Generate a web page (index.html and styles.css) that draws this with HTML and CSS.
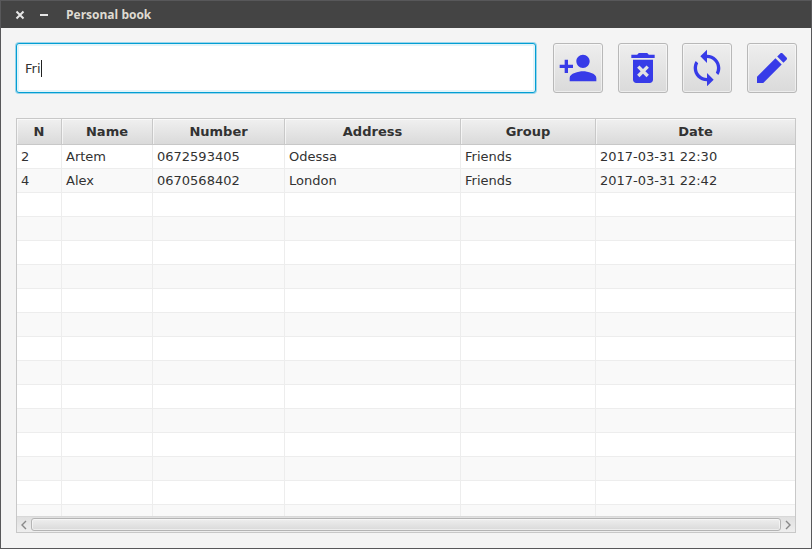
FILE: index.html
```html
<!DOCTYPE html>
<html lang="en">
<head>
<meta charset="utf-8">
<title>Personal book</title>
<link rel="stylesheet" href="styles.css">
</head>
<body>
<div class="window">
  <header class="titlebar">
    <button class="win-button" type="button" aria-label="Close"><svg width="10" height="10" viewBox="0 0 10 10"><path d="M1.5 1.5l7 7M8.5 1.5l-7 7"/></svg></button>
    <button class="win-button" type="button" aria-label="Minimize"><svg width="10" height="10" viewBox="0 0 10 10"><path d="M1 5h8"/></svg></button>
    <h1 class="title">Personal book</h1>
  </header>
  <main class="content">
    <div class="toolbar">
      <div class="search">
        <input class="search-input" type="text" value="Fri" aria-label="Search">
        <span class="caret"></span>
      </div>
      <div class="tools">
        <button class="tool" type="button" aria-label="Add person"><svg viewBox="0 0 24 24"><path d="M15 12c2.21 0 4-1.79 4-4s-1.79-4-4-4-4 1.79-4 4 1.79 4 4 4zm-9-2V7H4v3H1v2h3v3h2v-3h3v-2H6zm9 4c-2.67 0-8 1.34-8 4v2h16v-2c0-2.66-5.33-4-8-4z"/></svg></button>
        <button class="tool" type="button" aria-label="Delete"><svg viewBox="0 0 24 24"><path d="M6 19c0 1.1.9 2 2 2h8c1.1 0 2-.9 2-2V7H6v12zm2.46-7.12l1.41-1.41L12 12.59l2.12-2.12 1.41 1.41L13.41 14l2.12 2.12-1.41 1.41L12 15.41l-2.12 2.12-1.41-1.41L10.59 14l-2.13-2.12zM15.5 4l-1-1h-5l-1 1H5v2h14V4z"/></svg></button>
        <button class="tool" type="button" aria-label="Refresh"><svg viewBox="0 0 24 24"><path d="M12 4V1L8 5l4 4V6c3.31 0 6 2.69 6 6 0 1.01-.25 1.97-.7 2.8l1.46 1.46C19.54 15.03 20 13.57 20 12c0-4.42-3.58-8-8-8zm0 14c-3.31 0-6-2.69-6-6 0-1.01.25-1.97.7-2.8L5.24 7.74C4.46 8.97 4 10.43 4 12c0 4.42 3.58 8 8 8v3l4-4-4-4v3z"/></svg></button>
        <button class="tool" type="button" aria-label="Edit"><svg viewBox="0 0 24 24"><path d="M3 17.25V21h3.75L17.81 9.94l-3.75-3.75L3 17.25zM20.71 7.04c.39-.39.39-1.02 0-1.41l-2.34-2.34c-.39-.39-1.02-.39-1.41 0l-1.83 1.83 3.75 3.75 1.83-1.83z"/></svg></button>
      </div>
    </div>
    <div class="table-view">
      <div class="table-clip">
        <table class="contacts">
          <colgroup><col class="col-n"><col class="col-name"><col class="col-number"><col class="col-address"><col class="col-group"><col></colgroup>
          <thead>
            <tr><th scope="col">N</th><th scope="col">Name</th><th scope="col">Number</th><th scope="col">Address</th><th scope="col">Group</th><th scope="col">Date</th></tr>
          </thead>
          <tbody>
            <tr><td>2</td><td>Artem</td><td>0672593405</td><td>Odessa</td><td>Friends</td><td>2017-03-31 22:30</td></tr>
            <tr><td>4</td><td>Alex</td><td>0670568402</td><td>London</td><td>Friends</td><td>2017-03-31 22:42</td></tr>
            <tr><td></td><td></td><td></td><td></td><td></td><td></td></tr>
            <tr><td></td><td></td><td></td><td></td><td></td><td></td></tr>
            <tr><td></td><td></td><td></td><td></td><td></td><td></td></tr>
            <tr><td></td><td></td><td></td><td></td><td></td><td></td></tr>
            <tr><td></td><td></td><td></td><td></td><td></td><td></td></tr>
            <tr><td></td><td></td><td></td><td></td><td></td><td></td></tr>
            <tr><td></td><td></td><td></td><td></td><td></td><td></td></tr>
            <tr><td></td><td></td><td></td><td></td><td></td><td></td></tr>
            <tr><td></td><td></td><td></td><td></td><td></td><td></td></tr>
            <tr><td></td><td></td><td></td><td></td><td></td><td></td></tr>
            <tr><td></td><td></td><td></td><td></td><td></td><td></td></tr>
            <tr><td></td><td></td><td></td><td></td><td></td><td></td></tr>
            <tr><td></td><td></td><td></td><td></td><td></td><td></td></tr>
            <tr><td></td><td></td><td></td><td></td><td></td><td></td></tr>
          </tbody>
        </table>
      </div>
      <div class="scrollbar">
        <button class="scroll-arrow" type="button" aria-label="Scroll left"><svg width="6" height="10" viewBox="0 0 6 10"><path d="M5 1L1 5l4 4"/></svg></button>
        <div class="thumb"></div>
        <button class="scroll-arrow" type="button" aria-label="Scroll right"><svg width="6" height="10" viewBox="0 0 6 10"><path d="M1 1l4 4-4 4"/></svg></button>
      </div>
    </div>
  </main>
</div>
</body>
</html>
```
FILE: styles.css
```css
* {
  box-sizing: border-box;
}

body {
  margin: 0;
  font-family: "DejaVu Sans", sans-serif;
  font-size: 13px;
  color: #323232;
}

button {
  padding: 0;
  border: 0;
  background: none;
  display: flex;
  align-items: center;
  justify-content: center;
}

.window {
  height: 100vh;
  display: flex;
  flex-direction: column;
  background: #f4f4f4;
  border: 1px solid #58585a;
}

.titlebar {
  flex: none;
  display: flex;
  align-items: center;
  gap: 14px;
  height: 27px;
  padding: 0 14px;
  background: #444;
}

.win-button svg {
  fill: none;
  stroke: #e6e6e6;
  stroke-width: 2;
}

.title {
  margin: 0 0 0 3px;
  font: bold 12px/18px "Open Sans", "Noto Sans", sans-serif;
  color: #dfdbd2;
}

.content {
  flex: 1;
  min-height: 0;
  display: flex;
  flex-direction: column;
  gap: 25px;
  padding: 15px 15px 15px;
}

.toolbar {
  flex: none;
  display: flex;
  gap: 17px;
  margin-right: -1px;
}

.search {
  flex: 1;
  position: relative;
}

.search-input {
  width: 100%;
  height: 50px;
  padding: 0 8px;
  border: 1px solid #039ed3;
  border-radius: 3px;
  outline: none;
  background: #fff;
  box-shadow: 0 0 0 1px #9bd5ea, inset 0 0 0 2px #e3f4f9;
  font: inherit;
  color: inherit;
}

.caret {
  position: absolute;
  left: 25px;
  top: 17px;
  width: 1px;
  height: 17px;
  background: #222;
}

.tools {
  flex: 0 0 244px;
  display: flex;
  justify-content: space-between;
}

.tool {
  width: 50px;
  height: 50px;
  border: 1px solid #b8b8b8;
  border-radius: 3px;
  background: linear-gradient(#eee, #dadada);
  box-shadow: inset 0 0 0 1px rgba(255, 255, 255, 0.5);
}

.tool svg {
  width: 40px;
  height: 40px;
  fill: #373be8;
}

.table-view {
  flex: 1;
  min-height: 0;
  display: flex;
  flex-direction: column;
  border: 1px solid #c8c8c8;
  background: #fff;
}

.table-clip {
  flex: 1;
  min-height: 0;
  overflow: hidden;
}

.contacts {
  width: 100%;
  table-layout: fixed;
  border-collapse: separate;
  border-spacing: 0;
}

.col-n {
  width: 45px;
}

.col-name {
  width: 91px;
}

.col-number {
  width: 132px;
}

.col-address {
  width: 176px;
}

.col-group {
  width: 135px;
}

.contacts th {
  height: 26px;
  padding: 0;
  border: solid #c8c8c8;
  border-width: 0 1px 1px 0;
  background: linear-gradient(#f0f0f0, #dadada);
  box-shadow: inset 1px 1px 0 rgba(255, 255, 255, 0.6);
  text-align: center;
}

.contacts td {
  height: 24px;
  padding: 0 4px;
  border: solid #ededed;
  border-width: 0 1px 1px 0;
  line-height: 16px;
}

.contacts th:last-child,
.contacts td:last-child {
  border-right-width: 0;
}

.contacts tbody tr:nth-child(even) {
  background: #f9f9f9;
}

.scrollbar {
  flex: none;
  display: flex;
  height: 16px;
  padding: 1px 0;
  border-top: 1px solid #d8d8d8;
  background: linear-gradient(#e0e0e0, #eee);
}

.scroll-arrow {
  flex: 0 0 14px;
}

.scroll-arrow svg {
  fill: none;
  stroke: #888;
  stroke-width: 1.4;
}

.thumb {
  flex: 1;
  border: 1px solid #b4b4b4;
  border-radius: 3px;
  background: linear-gradient(#eee, #dadada);
  box-shadow: inset 0 0 0 1px rgba(255, 255, 255, 0.5);
}
```
